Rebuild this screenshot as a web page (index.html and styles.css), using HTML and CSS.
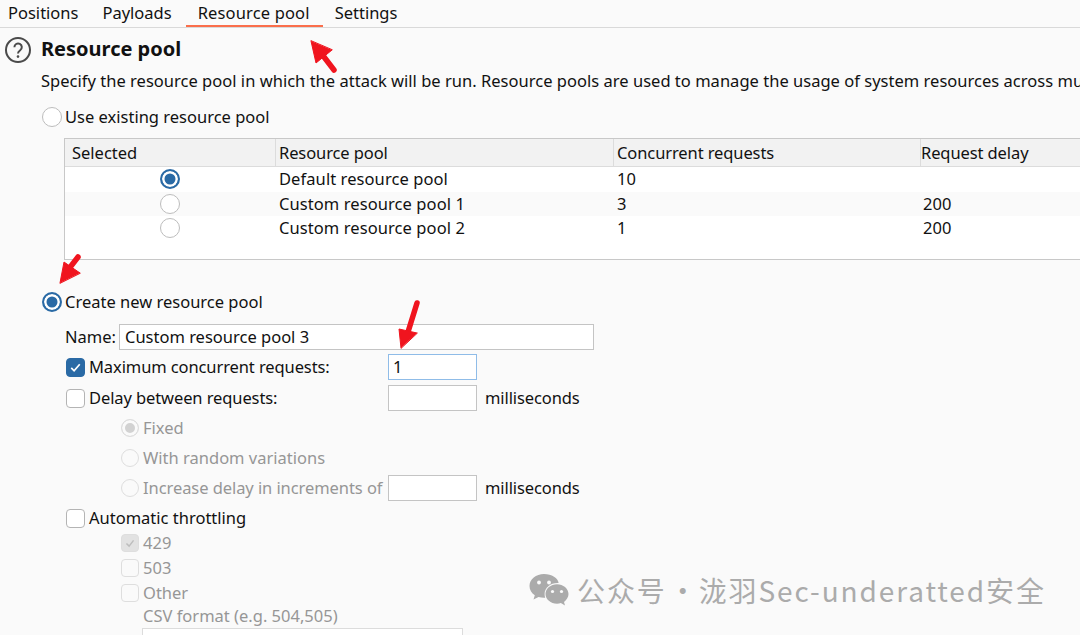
FILE: index.html
```html
<!DOCTYPE html>
<html lang="en">
<head>
<meta charset="utf-8">
<title>Resource pool</title>
<link rel="stylesheet" href="styles.css">
</head>
<body>
<nav class="tabs">
  <span class="tab">Positions</span>
  <span class="tab">Payloads</span>
  <span class="tab active">Resource pool</span>
  <span class="tab">Settings</span>
</nav>
<main class="panel">
  <header class="title-row">
    <svg class="help" viewBox="0 0 28 28"><circle cx="14" cy="14" r="12" fill="none" stroke="#4a4a4a" stroke-width="2"/><path d="M10.4 11.2a3.7 3.7 0 1 1 5.8 3c-1.4 1-2.2 1.6-2.2 3.2" fill="none" stroke="#4a4a4a" stroke-width="2"/><circle cx="14" cy="20.6" r="1.3" fill="#4a4a4a"/></svg>
    <h1>Resource pool</h1>
  </header>
  <p class="desc">Specify the resource pool in which the attack will be run. Resource pools are used to manage the usage of system resources across mu</p>
  <div class="opt existing"><span class="radio"></span><span>Use existing resource pool</span></div>

  <section class="table">
    <div class="cell head">Selected</div><div class="cell head">Resource pool</div><div class="cell head">Concurrent requests</div><div class="cell head last">Request delay</div>
    <div class="cell ctr"><span class="radio on"></span></div><div class="cell pool">Default resource pool</div><div class="cell">10</div><div class="cell delay"></div>
    <div class="cell ctr alt"><span class="radio"></span></div><div class="cell pool alt">Custom resource pool 1</div><div class="cell alt">3</div><div class="cell delay alt">200</div>
    <div class="cell ctr"><span class="radio"></span></div><div class="cell pool">Custom resource pool 2</div><div class="cell">1</div><div class="cell delay">200</div>
  </section>

  <div class="opt create"><span class="radio on"></span><span>Create new resource pool</span></div>
  <div class="name-row"><span>Name:</span><span class="field name">Custom resource pool 3</span></div>
  <div class="check-row first">
    <span class="box on"><svg viewBox="0 0 18 18"><path d="M4.5 9.500l3 3 6-7" fill="none" stroke="#fff" stroke-width="1.800"/></svg></span>
    <span class="check-label">Maximum concurrent requests:</span><span class="field num focus">1</span>
  </div>
  <div class="check-row">
    <span class="box"></span>
    <span class="check-label">Delay between requests:</span><span class="field num"></span><span class="unit">milliseconds</span>
  </div>
  <div class="sub-row dis"><span class="radio dis-r dot"></span><span>Fixed</span></div>
  <div class="sub-row dis"><span class="radio dis-r"></span><span>With random variations</span></div>
  <div class="sub-row dis"><span class="radio dis-r"></span><span class="inc">Increase delay in increments of</span><span class="field num"></span><span class="unit">milliseconds</span></div>
  <div class="check-row auto"><span class="box"></span><span>Automatic throttling</span></div>
  <div class="mini-row dis"><span class="box dis-b ticked"><svg viewBox="0 0 18 18"><path d="M5 9.500l3 3 5-6.500" fill="none" stroke="#bdbdbd" stroke-width="1.600"/></svg></span><span>429</span></div>
  <div class="mini-row dis"><span class="box dis-b"></span><span>503</span></div>
  <div class="mini-row dis"><span class="box dis-b"></span><span>Other</span></div>
  <div class="csv dis">CSV format (e.g. 504,505)</div>
  <div class="field csv-input"></div>
</main>

<svg class="arrows" viewBox="0 0 1080 635" aria-hidden="true">
  <g fill="#f0141e" stroke="#f0141e" stroke-linejoin="round" stroke-linecap="round">
    <path d="M334 70L321 53" stroke-width="5.500" fill="none"/>
    <path d="M311 41L316 63L332 50Z" stroke-width="1"/>
    <path d="M78 257L68 270" stroke-width="5.500" fill="none"/>
    <path d="M60 283L64 262L80 273Z" stroke-width="1"/>
    <path d="M417 303L408 332" stroke-width="5.500" fill="none"/>
    <path d="M401 348L399 329L417 333Z" stroke-width="1"/>
  </g>
</svg>

<aside class="mark">
  <svg class="wechat" viewBox="0 0 40 34"><path d="M15 1C7 1 .5 6.300.5 13c0 3.800 2 7 5.300 9.300L4.500 26.500l5-2.600c1.700.5 3.500.8 5.500.8h1.200c-.4-1.200-.6-2.400-.6-3.700 0-6.200 5.800-11 13-11h1C29.200 5 22.700 1 15 1z" fill="#ababab"/><path d="M39.500 21c0-5.400-5.300-9.700-11.500-9.700S16.500 15.600 16.500 21s5.300 9.700 11.500 9.700c1.400 0 2.700-.2 3.900-.6l4.100 2.400-1-3.600c2.700-2 4.500-4.800 4.500-7.900z" fill="#ababab"/><circle cx="10" cy="9.500" r="1.900" fill="#fafafa"/><circle cx="20" cy="9.500" r="1.900" fill="#fafafa"/><circle cx="23.500" cy="18.500" r="1.600" fill="#fafafa"/><circle cx="32.500" cy="18.500" r="1.600" fill="#fafafa"/></svg>
  <span>公众号<span class="sep">·</span>泷羽Sec-underatted安全</span>
</aside>
</body>
</html>
```
FILE: styles.css
```css
* { box-sizing: border-box; }
html, body { margin: 0; height: 635px; overflow: hidden; }
body {
  position: relative;
  width: 1080px;
  background: #fafafa;
  color: #111;
  font: 16.5px/22px "Noto Sans", "Open Sans", sans-serif;
}
.tabs {
  display: flex;
  height: 28px;
  border-bottom: 1px solid #d9d9d9;
}
.tab { padding: 2px 8px 0; height: 27px; margin-right: 8px; white-space: nowrap; }
.tab.active { padding: 2px 12px 0; margin: 0 4px 0 -2px; border-bottom: 2px solid #fa6e4b; width: 137px; letter-spacing: .15px; }
.panel { white-space: nowrap; }
.title-row { display: flex; align-items: center; height: 44px; padding-left: 4px; }
.help { width: 28px; height: 28px; margin-right: 9px; }
h1 { margin: -2px 0 0; font-size: 20px; font-weight: 700; line-height: 28px; }
.desc { margin: -2px 0 0; padding-left: 41px; height: 22px; width: 1080px; overflow: hidden; letter-spacing: .02px; }
.radio {
  display: inline-block;
  flex: none;
  width: 20px;
  height: 20px;
  border: 1.5px solid #bdbdbd;
  border-radius: 50%;
  background: #fff;
}
.radio.on { border: 2px solid #2a6aa5; box-shadow: inset 0 0 0 2.500px #fff; background: #2a6aa5; }
.opt { display: flex; align-items: center; height: 24px; padding-left: 42px; gap: 3px; }
.existing { margin-top: 13px; }
.table {
  display: grid;
  grid-template-columns: 211px 338px 307px 220px;
  grid-template-rows: 28px repeat(3, 24.500px);
  width: 1090px;
  height: 122px;
  margin: 9px 0 0 64px;
  border: 1px solid #c8c8c8;
  background: #fff;
  align-content: start;
}
.cell { display: flex; align-items: center; padding-left: 3px; }
.head { background: #f2f2f2; border-bottom: 1px solid #dcdcdc; border-right: 1px solid #dcdcdc; letter-spacing: -.1px; }
.head:first-child { padding-left: 7px; letter-spacing: 0; }
.head.last { padding-left: 0; }
.pool { letter-spacing: .08px; }
.delay { padding-left: 2px; }
.ctr { justify-content: center; padding: 0 2px 0 0; }
.alt { background: #fafafa; }
.create { margin-top: 30px; }
.name-row { display: flex; align-items: center; height: 26px; margin-top: 10px; padding-left: 65px; gap: 3px; }
.field { display: flex; align-items: center; background: #fff; border: 1px solid #c4c4c4; height: 26px; padding-left: 5px; }
.name { width: 475px; }
.check-row { display: flex; align-items: center; height: 26px; padding-left: 66px; margin-top: 5px; }
.check-row.first { margin-top: 4px; }
.box { display: inline-flex; flex: none; width: 19px; height: 19px; border: 1.5px solid #b4b4b4; border-radius: 4px; background: #fff; }
.box svg { width: 100%; height: 100%; }
.box.on { background: #2a6aa5; border-color: #2a6aa5; }
.check-label { margin-left: 4px; width: 299px; letter-spacing: -.1px; }
.num { width: 89px; }
.focus { border-color: #8fbce8; padding-left: 4px; }
.unit { margin-left: 8px; color: #111; letter-spacing: -.1px; }
.sub-row { display: flex; align-items: center; height: 26px; padding-left: 121px; margin-top: 4px; gap: 4px; }
.sub-row .inc { width: 241px; letter-spacing: -.07px; }
.sub-row .unit { margin-left: 4px; }
.dis { color: #969696; }
.radio.dis-r { width: 18px; height: 18px; border-color: #dedede; background: transparent; }
.radio.dot { background: #d2d2d2; box-shadow: inset 0 0 0 3px #fafafa; }
.auto { margin-top: 4px; gap: 4px; }
.mini-row { display: flex; align-items: center; height: 25px; padding-left: 121px; gap: 4px; }
.auto + .mini-row { margin-top: -1px; }
.box.dis-b { border-color: #dedede; width: 18px; height: 18px; background: transparent; }
.box.ticked { background: #e2e2e2; }
.csv { padding-left: 143px; height: 22px; }
.csv-input { width: 321px; margin: 1px 0 0 142px; border-color: #dcdcdc; }
.arrows { position: absolute; inset: 0; width: 1080px; height: 635px; pointer-events: none; }
.mark {
  position: absolute;
  left: 529px;
  top: 570px;
  display: flex;
  align-items: center;
  gap: 8px;
  color: #ababab;
  font: 28px/40px "Noto Sans CJK SC", sans-serif;
  letter-spacing: 1.900px;
  white-space: nowrap;
}
.sep { display: inline-block; width: 32px; text-align: center; letter-spacing: 0; }
.wechat { width: 40px; height: 34px; }
```
